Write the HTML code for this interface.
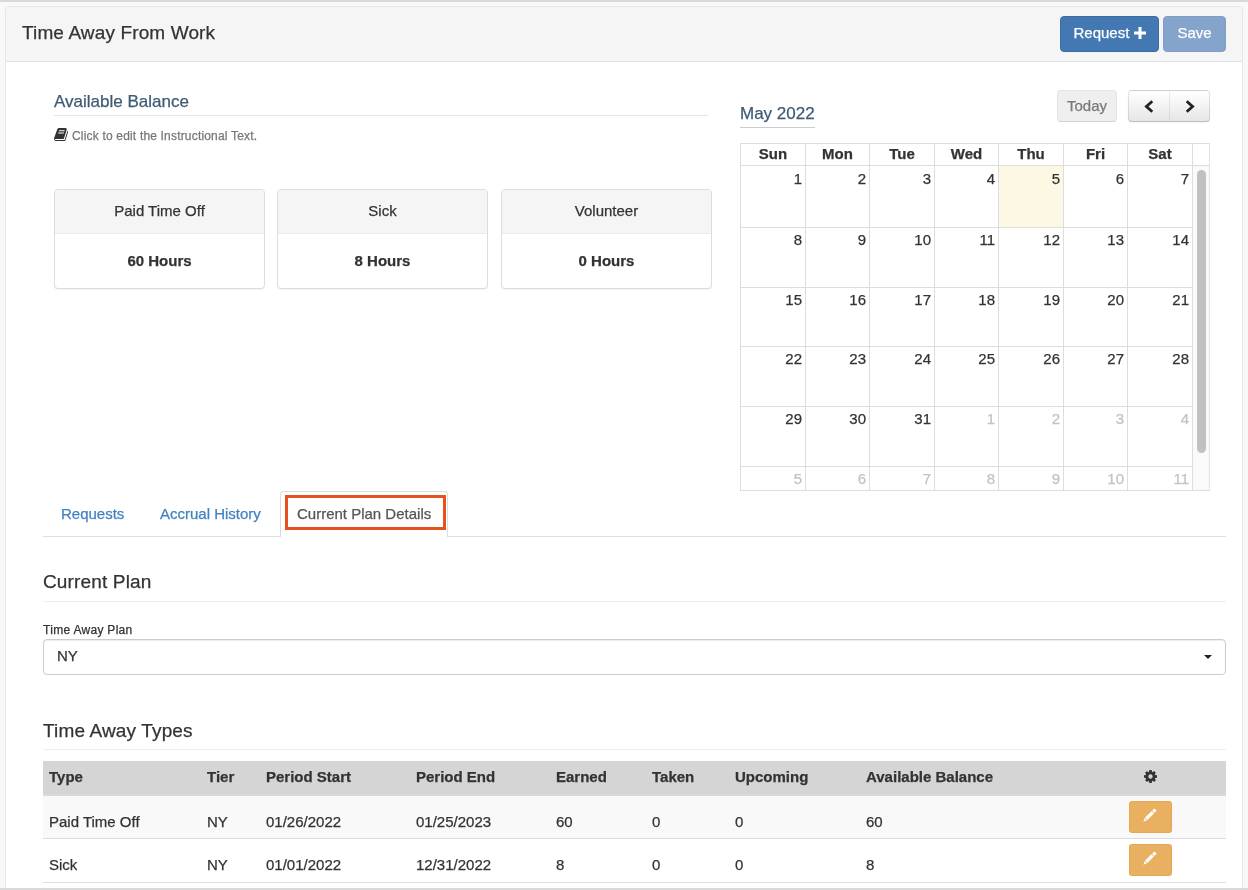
<!DOCTYPE html>
<html lang="en">
<head>
<meta charset="utf-8">
<title>Time Away From Work</title>
<style>
*{box-sizing:border-box;}
html,body{margin:0;padding:0;}
body{width:1248px;height:890px;overflow:hidden;background:#f8f8f8;font-family:"Liberation Sans",Arial,sans-serif;font-size:14px;line-height:20px;color:#333;position:relative;}
.abs{position:absolute;}
body{-webkit-text-stroke:0.25px;}
.panel{will-change:transform;}
.topbar{left:0;top:0;width:1248px;height:2px;background:#d9d9d9;}
.botbar{left:0;top:888px;width:1248px;height:2px;background:#d9d9d9;}
.panel{left:5px;top:6px;width:1238px;height:900px;background:#fff;border:1px solid #e6e6e6;border-radius:4px;}
.phead{left:0;top:0;width:1236px;height:55px;background:#f5f5f5;border-bottom:1px solid #e0e0e0;border-radius:3px 3px 0 0;}
.ptitle{left:16px;top:13px;font-size:19px;line-height:26px;color:#333;white-space:nowrap;letter-spacing:0.13px;}
.btn{position:absolute;border-radius:4px;border:1px solid transparent;color:#fff;font-size:15px;line-height:22px;text-align:center;white-space:nowrap;}
.btn-req{left:1054px;top:9px;width:99px;height:36px;background:#4478b2;border-color:#3d6ca0;padding-top:5px;}
.btn-save{left:1157px;top:9px;width:63px;height:36px;background:#85a4cb;border-color:#7f9dc3;padding-top:5px;}

.h-avail{left:48px;top:84px;width:654px;height:25px;border-bottom:1px solid #e5e5e5;font-size:17px;line-height:22px;color:#3f5a73;white-space:nowrap;}
.instr{left:66px;top:121px;font-size:12px;line-height:16px;color:#777;white-space:nowrap;letter-spacing:0.18px;}
.card{position:absolute;top:182px;width:211px;height:100px;border:1px solid #ddd;border-radius:4px;background:#fff;box-shadow:0 1px 1px rgba(0,0,0,.05);text-align:center;font-size:15px;}
.card .ch{height:44px;background:#f5f5f5;border-bottom:1px solid #ebebeb;border-radius:3px 3px 0 0;line-height:21px;padding-top:10px;color:#333;}
.card .cb{font-weight:bold;line-height:21px;padding-top:16px;color:#333;}

.caltitle{left:734px;top:96px;height:25px;border-bottom:1px solid #ccc;font-size:17px;line-height:22px;color:#3f5a73;white-space:nowrap;}
.fcb{position:absolute;top:83px;height:32px;font-size:15px;line-height:30px;text-align:center;border:1px solid;border-color:#e6e6e6 #e6e6e6 #bfbfbf;border-color:rgba(0,0,0,.1) rgba(0,0,0,.1) rgba(0,0,0,.25);background:linear-gradient(to bottom,#fff,#e6e6e6);color:#333;box-shadow:inset 0 1px 0 rgba(255,255,255,.2),0 1px 2px rgba(0,0,0,.05);}
.cal{left:734px;top:136px;width:470px;height:348px;background:#fff;overflow:hidden;}
.cal .ln{position:absolute;background:#ddd;}
.cal .dh{position:absolute;top:0px;height:21px;text-align:center;font-weight:bold;font-size:15px;line-height:21px;color:#333;}
.cal .dn{position:absolute;text-align:right;font-size:15px;line-height:21px;color:#333;padding-right:3px;}
.cal .om{color:#c3c3c3;}

.tabline{left:37px;top:529px;width:1183px;height:1px;background:#e0e0e0;}
.tab{position:absolute;top:496px;font-size:15px;line-height:21px;white-space:nowrap;color:#4282c0;}
.tabact{left:274px;top:484px;width:168px;height:46px;border:1px solid #ddd;border-bottom:0;border-radius:4px 4px 0 0;background:#fff;}
.obox{left:279px;top:488px;width:161px;height:35px;border:3px solid #e8501e;}
.h3{position:absolute;left:37px;font-size:19px;line-height:26px;color:#333;white-space:nowrap;}
.hr{position:absolute;left:37px;width:1183px;height:1px;background:#eee;}
.lbl{left:37px;top:615px;font-size:12px;line-height:16px;color:#333;white-space:nowrap;letter-spacing:0.3px;}
.sel{left:37px;top:632px;width:1183px;height:36px;border:1px solid #ccc;border-radius:4px;background:#fff;box-shadow:inset 0 1px 1px rgba(0,0,0,.075);font-size:15px;line-height:21px;padding:5px 0 0 13px;color:#333;}
.thead{left:37px;top:754px;width:1183px;height:35px;background:#d5d5d5;border-bottom:2px solid #dadada;}
.tr{position:absolute;left:37px;width:1183px;height:43px;border-bottom:1px solid #ddd;}
.th,.td{position:absolute;font-size:15px;line-height:21px;white-space:nowrap;color:#333;}
.th{font-weight:bold;top:5px;}
.td{top:15px;}
.ebtn{position:absolute;left:1086px;top:5px;width:43px;height:32px;border-radius:2.5px;background:#e9b061;border:1px solid #e6a856;}
</style>
</head>
<body>
<div class="abs topbar"></div>
<div class="abs panel">
  <div class="abs phead">
    <div class="abs ptitle">Time Away From Work</div>
    <div class="btn btn-req">Request <svg width="12" height="12" viewBox="0 0 12 12" style="vertical-align:-1px"><path d="M4.5 0h3v4.5H12v3H7.500V12h-3V7.500H0v-3h4.500z" fill="#fff"/></svg></div>
    <div class="btn btn-save">Save</div>
  </div>

  <div class="abs h-avail">Available Balance</div>
  <svg class="abs" style="left:47.900px;top:120.400px" width="14.400" height="15.200" viewBox="0 0 1700 1792"><path fill="#333" d="M1639 478q40 57 18 129l-275 906q-19 64-76.500 107.500t-122.500 43.500h-923q-77 0-148.500-53.500t-99.500-131.500q-24-67-2-127 0-4 3-27t4-37q1-8-3-21.500t-3-19.500q2-11 8-21t16.500-23.500 16.500-23.500q23-38 45-91.500t30-91.500q3-10 .5-30t-.5-28q3-11 17-28t17-23q21-36 42-92t25-90q1-9-2.500-32t.5-28q4-13 22-30.500t22-22.500q19-26 42.500-84.500t27.500-96.500q1-8-3-25.500t-2-26.500q2-8 9-18t18-23 17-21q8-12 16.500-30.500t15-35 16-36 19.500-32 26.500-23.500 36-11.500 47.500 5.500l-1 3q38-9 51-9h761q74 0 114 56t18 130l-274 906q-36 119-71.500 153.500t-128.500 34.500h-869q-27 0-38 15-11 16-1 43 24 70 144 70h923q29 0 56-15.500t35-41.500l300-987q7-22 5-57 38 15 59 43zm-1064 2q-4 13 2 22.500t20 9.500h608q13 0 25.500-9.500t16.500-22.500l21-64q4-13-2-22.500t-20-9.500h-608q-13 0-25.500 9.500t-16.500 22.500zm-83 256q-4 13 2 22.500t20 9.500h608q13 0 25.500-9.500t16.500-22.500l21-64q4-13-2-22.500t-20-9.500h-608q-13 0-25.500 9.500t-16.500 22.500z"/></svg>
  <div class="abs instr">Click to edit the Instructional Text.</div>
  <div class="card" style="left:48px"><div class="ch">Paid Time Off</div><div class="cb">60 Hours</div></div>
  <div class="card" style="left:271px"><div class="ch">Sick</div><div class="cb">8 Hours</div></div>
  <div class="card" style="left:495px"><div class="ch">Volunteer</div><div class="cb">0 Hours</div></div>
  <!--LEFT-->
  <div class="abs caltitle">May 2022</div>
  <div class="fcb" style="left:1051px;width:60px;border-radius:4px;background:#efefef;color:#7a7a7a;border-color:#e3e3e3 #e3e3e3 #d3d3d3;box-shadow:none">Today</div>
  <div class="fcb" style="left:1122px;width:42px;border-radius:4px 0 0 4px;border-right-color:rgba(0,0,0,.06)"><svg width="10" height="13" viewBox="0 0 10 13" style="position:absolute;left:14.700px;top:9.400px"><path d="M8.300 1.300L2.400 6.500l5.900 5.200" fill="none" stroke="#222" stroke-width="2.800"/></svg></div>
  <div class="fcb" style="left:1164px;width:40px;border-radius:0 4px 4px 0;border-left:0"><svg width="10" height="13" viewBox="0 0 10 13" style="position:absolute;left:14.900px;top:9.400px"><path d="M1.700 1.300L7.600 6.500l-5.900 5.200" fill="none" stroke="#222" stroke-width="2.800"/></svg></div>
  <div class="abs cal"><div style="position:absolute;left:259px;top:23px;width:64px;height:61px;background:#fcf8e3"></div>
<div style="position:absolute;left:453px;top:23px;width:16px;height:324px;background:#fafafa"></div>
<div style="position:absolute;left:457px;top:27px;width:9px;height:283px;background:#c1c1c1;border-radius:5px"></div>
<div class="ln" style="left:0;top:0;width:470px;height:1px"></div>
<div class="ln" style="left:0;top:22px;width:470px;height:1px"></div>
<div class="ln" style="left:0;top:84px;width:453px;height:1px"></div>
<div class="ln" style="left:0;top:144px;width:453px;height:1px"></div>
<div class="ln" style="left:0;top:203px;width:453px;height:1px"></div>
<div class="ln" style="left:0;top:263px;width:453px;height:1px"></div>
<div class="ln" style="left:0;top:323px;width:453px;height:1px"></div>
<div class="ln" style="left:0;top:347px;width:470px;height:1px"></div>
<div class="ln" style="left:0px;top:0;width:1px;height:348px"></div>
<div class="ln" style="left:65px;top:0;width:1px;height:348px"></div>
<div class="ln" style="left:129px;top:0;width:1px;height:348px"></div>
<div class="ln" style="left:194px;top:0;width:1px;height:348px"></div>
<div class="ln" style="left:258px;top:0;width:1px;height:348px"></div>
<div class="ln" style="left:323px;top:0;width:1px;height:348px"></div>
<div class="ln" style="left:387px;top:0;width:1px;height:348px"></div>
<div class="ln" style="left:452px;top:0;width:1px;height:348px"></div>
<div class="ln" style="left:469px;top:0;width:1px;height:348px;background:#e4e4e4"></div>
<div class="dh" style="left:1px;width:64px">Sun</div>
<div class="dh" style="left:66px;width:63px">Mon</div>
<div class="dh" style="left:130px;width:64px">Tue</div>
<div class="dh" style="left:195px;width:63px">Wed</div>
<div class="dh" style="left:259px;width:64px">Thu</div>
<div class="dh" style="left:324px;width:63px">Fri</div>
<div class="dh" style="left:388px;width:64px">Sat</div>
<div class="dn" style="left:1px;top:25px;width:64px">1</div>
<div class="dn" style="left:66px;top:25px;width:63px">2</div>
<div class="dn" style="left:130px;top:25px;width:64px">3</div>
<div class="dn" style="left:195px;top:25px;width:63px">4</div>
<div class="dn" style="left:259px;top:25px;width:64px">5</div>
<div class="dn" style="left:324px;top:25px;width:63px">6</div>
<div class="dn" style="left:388px;top:25px;width:64px">7</div>
<div class="dn" style="left:1px;top:86px;width:64px">8</div>
<div class="dn" style="left:66px;top:86px;width:63px">9</div>
<div class="dn" style="left:130px;top:86px;width:64px">10</div>
<div class="dn" style="left:195px;top:86px;width:63px">11</div>
<div class="dn" style="left:259px;top:86px;width:64px">12</div>
<div class="dn" style="left:324px;top:86px;width:63px">13</div>
<div class="dn" style="left:388px;top:86px;width:64px">14</div>
<div class="dn" style="left:1px;top:146px;width:64px">15</div>
<div class="dn" style="left:66px;top:146px;width:63px">16</div>
<div class="dn" style="left:130px;top:146px;width:64px">17</div>
<div class="dn" style="left:195px;top:146px;width:63px">18</div>
<div class="dn" style="left:259px;top:146px;width:64px">19</div>
<div class="dn" style="left:324px;top:146px;width:63px">20</div>
<div class="dn" style="left:388px;top:146px;width:64px">21</div>
<div class="dn" style="left:1px;top:205px;width:64px">22</div>
<div class="dn" style="left:66px;top:205px;width:63px">23</div>
<div class="dn" style="left:130px;top:205px;width:64px">24</div>
<div class="dn" style="left:195px;top:205px;width:63px">25</div>
<div class="dn" style="left:259px;top:205px;width:64px">26</div>
<div class="dn" style="left:324px;top:205px;width:63px">27</div>
<div class="dn" style="left:388px;top:205px;width:64px">28</div>
<div class="dn" style="left:1px;top:265px;width:64px">29</div>
<div class="dn" style="left:66px;top:265px;width:63px">30</div>
<div class="dn" style="left:130px;top:265px;width:64px">31</div>
<div class="dn om" style="left:195px;top:265px;width:63px">1</div>
<div class="dn om" style="left:259px;top:265px;width:64px">2</div>
<div class="dn om" style="left:324px;top:265px;width:63px">3</div>
<div class="dn om" style="left:388px;top:265px;width:64px">4</div>
<div class="dn om" style="left:1px;top:325px;width:64px">5</div>
<div class="dn om" style="left:66px;top:325px;width:63px">6</div>
<div class="dn om" style="left:130px;top:325px;width:64px">7</div>
<div class="dn om" style="left:195px;top:325px;width:63px">8</div>
<div class="dn om" style="left:259px;top:325px;width:64px">9</div>
<div class="dn om" style="left:324px;top:325px;width:63px">10</div>
<div class="dn om" style="left:388px;top:325px;width:64px">11</div></div>
  <!--CAL-->

  <div class="abs tabline"></div>
  <div class="tab" style="left:55px">Requests</div>
  <div class="tab" style="left:154px">Accrual History</div>
  <div class="abs tabact"></div>
  <div class="abs obox"></div>
  <div class="tab" style="left:291px;color:#555">Current Plan Details</div>
  <!--TABS-->

  <div class="h3" style="top:562px;letter-spacing:0.15px">Current Plan</div>
  <div class="hr" style="top:594px"></div>
  <div class="abs lbl">Time Away Plan</div>
  <div class="abs sel">NY<svg width="8" height="4" viewBox="0 0 8 4" style="position:absolute;right:13.500px;top:15px"><path d="M0 0h8L4 4z" fill="#222"/></svg></div>
  <!--PLAN-->

  <div class="h3" style="top:711px;letter-spacing:0.15px">Time Away Types</div>
  <div class="hr" style="top:742px"></div>
  <div class="abs thead"><div class="th" style="left:6px">Type</div><div class="th" style="left:164px">Tier</div><div class="th" style="left:223px">Period Start</div><div class="th" style="left:373px">Period End</div><div class="th" style="left:513px">Earned</div><div class="th" style="left:609px">Taken</div><div class="th" style="left:692px">Upcoming</div><div class="th" style="left:823px">Available Balance</div><svg width="13" height="13" viewBox="128 128 1536 1536" style="position:absolute;left:1101px;top:9px"><path fill="#333" d="M1152 896q0-106-75-181t-181-75-181 75-75 181 75 181 181 75 181-75 75-181zm512-109v222q0 12-8 23t-20 13l-185 28q-19 54-39 91 35 50 107 138 10 12 10 25t-9 23q-27 37-99 108t-94 71q-12 0-26-9l-138-108q-44 23-91 38-16 136-29 186-7 28-36 28h-222q-14 0-24.500-8.500t-11.500-21.500l-28-184q-49-16-90-37l-141 107q-10 9-25 9-14 0-25-11-126-114-165-168-7-10-7-23 0-12 8-23 15-21 51-66.500t54-70.500q-27-50-41-99l-183-27q-13-2-21-12.500t-8-23.500v-222q0-12 8-23t19-13l186-28q14-46 39-92-40-57-107-138-10-12-10-24 0-10 9-23 26-36 98.500-107.500t94.500-71.500q13 0 26 10l138 107q44-23 91-38 16-136 29-186 7-28 36-28h222q14 0 24.500 8.500t11.500 21.500l28 184q49 16 90 37l142-107q9-9 24-9 13 0 25 10 129 119 165 170 7 8 7 22 0 12-8 23-15 21-51 66.500t-54 70.500q26 50 41 98l183 28q13 2 21 12.500t8 23.500z"/></svg></div>
  <div class="tr" style="top:789px;background:#f9f9f9"><div class="td" style="left:6px">Paid Time Off</div><div class="td" style="left:164px">NY</div><div class="td" style="left:223px">01/26/2022</div><div class="td" style="left:373px">01/25/2023</div><div class="td" style="left:513px">60</div><div class="td" style="left:609px">0</div><div class="td" style="left:692px">0</div><div class="td" style="left:823px">60</div><div class="ebtn"><svg width="14" height="14" viewBox="0 0 14 14" style="position:absolute;left:13.200px;top:5.800px"><g transform="translate(0.350 13.650) rotate(-45)" fill="#fff"><path d="M0 0L3.600-1.650V1.650z"/><rect x="4.100" y="-1.650" width="9.100" height="3.300"/><rect x="13.800" y="-1.650" width="3.400" height="3.300" rx="0.800"/></g></svg></div></div>
  <div class="tr" style="top:832px;height:44px;background:#fff"><div class="td" style="left:6px">Sick</div><div class="td" style="left:164px">NY</div><div class="td" style="left:223px">01/01/2022</div><div class="td" style="left:373px">12/31/2022</div><div class="td" style="left:513px">8</div><div class="td" style="left:609px">0</div><div class="td" style="left:692px">0</div><div class="td" style="left:823px">8</div><div class="ebtn"><svg width="14" height="14" viewBox="0 0 14 14" style="position:absolute;left:13.200px;top:5.800px"><g transform="translate(0.350 13.650) rotate(-45)" fill="#fff"><path d="M0 0L3.600-1.650V1.650z"/><rect x="4.100" y="-1.650" width="9.100" height="3.300"/><rect x="13.800" y="-1.650" width="3.400" height="3.300" rx="0.800"/></g></svg></div></div>
  <!--TABLE-->
</div>
<div class="abs botbar"></div>
</body>
</html>
